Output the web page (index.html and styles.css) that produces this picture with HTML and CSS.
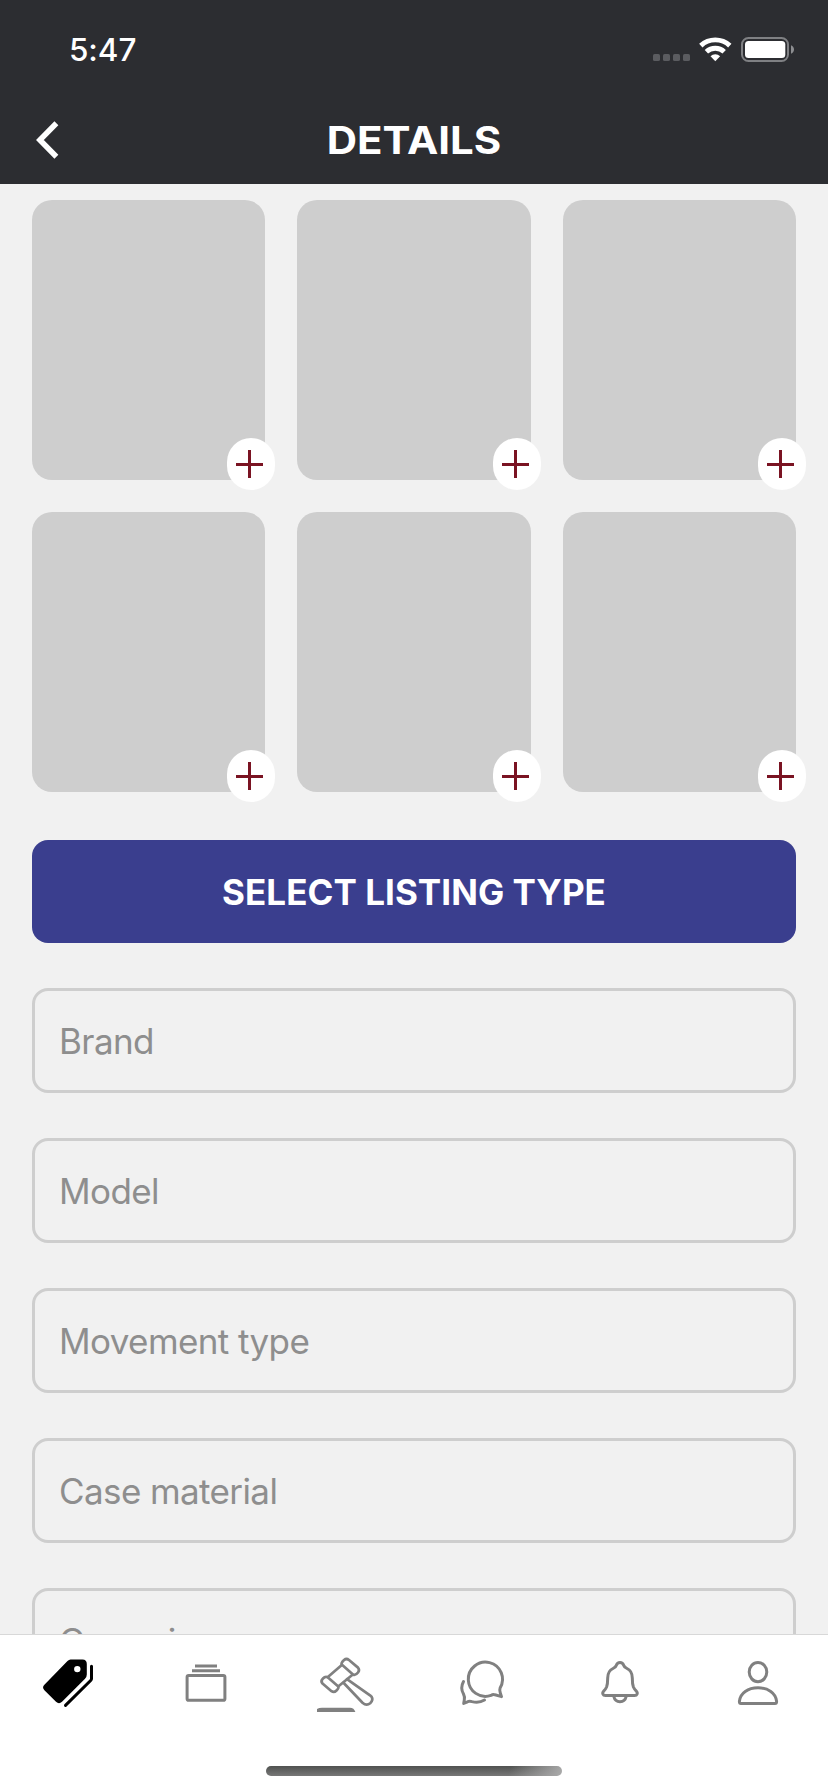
FILE: index.html
```html
<!DOCTYPE html>
<html lang="en">
<head>
<meta charset="utf-8">
<title>Details</title>
<link rel="stylesheet" href="styles.css">
</head>
<body>
<div class="app">
  <header class="header">
    <div class="status">
      <span class="time">5:47</span>
      <svg class="status-icons" viewBox="0 0 142 26" width="142" height="26">
        <g fill="#5b5c60"><rect x="0" y="17" width="7" height="7" rx="1.6"/><rect x="10" y="17" width="7" height="7" rx="1.6"/><rect x="20" y="17" width="7" height="7" rx="1.6"/><rect x="30" y="17" width="7" height="7" rx="1.6"/></g>
        <g fill="none" stroke="#fff" stroke-width="4.9">
          <path d="M47.8 8.6A21.3 21.3 0 0 1 76.8 8.6"/>
          <path d="M53.4 14.8A13 13 0 0 1 71.2 14.8"/>
        </g>
        <path d="M62.3 24.3L57.5 19.2A7 7 0 0 1 67.1 19.2Z" fill="#fff"/>
        <rect x="89" y="1" width="46" height="23" rx="6.5" fill="none" stroke="#7f8083" stroke-width="2"/>
        <rect x="92" y="4" width="40.3" height="17" rx="3.5" fill="#fff"/>
        <path d="M138 8.3C142 10 142 15 138 16.8Z" fill="#8d8e91"/>
      </svg>
    </div>
    <div class="title-bar">
      <svg class="back" viewBox="0 0 32 44" width="32" height="44"><path d="M24.4 5.3L7.9 22L24.4 38.7" fill="none" stroke="#fff" stroke-width="5.5"/></svg>
      <h1 class="title">DETAILS</h1>
    </div>
  </header>

  <main class="content">
    <div class="photos">
      <div class="photo"><span class="add"></span></div>
      <div class="photo"><span class="add"></span></div>
      <div class="photo"><span class="add"></span></div>
      <div class="photo"><span class="add"></span></div>
      <div class="photo"><span class="add"></span></div>
      <div class="photo"><span class="add"></span></div>
    </div>
    <div class="listing-button"><span>SELECT LISTING TYPE</span></div>
    <div class="fields">
      <div class="field">Brand</div>
      <div class="field">Model</div>
      <div class="field">Movement type</div>
      <div class="field">Case material</div>
      <div class="field">Case size</div>
    </div>
  </main>

  <footer class="footer">
    <nav class="tabs">
      <svg class="tab tab-active" viewBox="0 0 64 64">
        <path fill="#000" fill-rule="evenodd" d="M33.5 8.5H45.5Q49.8 8.5 49.8 13V23.5Q49.8 26 48 27.8L25 50.8Q22 53.6 19 50.8L7.4 39.3Q4.7 36.5 7.4 33.8L30.5 10Q32 8.5 33.5 8.5ZM40.3 14.9A3.2 3.2 0 1 0 40.3 21.3A3.2 3.2 0 1 0 40.3 14.9Z"/>
        <path fill="none" stroke="#000" d="M54.5 15.2V27.8Q54.5 28.6 53.9 29.2L28.5 54.4"/>
      </svg>
      <svg class="tab" viewBox="0 0 64 64">
        <rect x="12.1" y="24.5" width="37.8" height="24.8" rx="1.6"/>
        <path class="flat" d="M17 19.7H45M20 15H42"/>
      </svg>
      <svg class="tab tab-thin" viewBox="0 0 64 64">
        <path d="M28.7 13.6Q27.8 12 31 9Q33.5 7 36 9L45 16.6Q47 19 45 21.5Q42.5 24.8 40 23.5Z"/>
        <path d="M14.7 26.2Q12.2 25 10 27.5Q7.3 30 9.5 32.5L18.5 40.2Q21 42 23.5 39.5Q26.5 36.5 25 35.2Z"/>
        <path d="M28.2 14.5L14.9 26M39.2 24L25.5 35.3"/>
        <path d="M30.5 31.7L49.5 51.8Q53.5 55.3 57.2 52.3Q60.6 49 58.6 45.8L57 44.3L34 28.2"/>
        <path class="base" d="M4 61V58Q6 56.7 9 56.7H37Q41 56.7 42.4 61Z"/>
      </svg>
      <svg class="tab" viewBox="0 0 64 64">
        <path d="M49.1 37A17.1 17.1 0 1 0 40 44.4Q42 43 44 43.8L50.5 45.6L49.3 42Q48.3 39 49.1 37Z"/>
        <path d="M12.5 30.5Q9 37 12.5 43Q14 46 13.3 49L12.7 52.4L16.5 50.8Q18.3 49.7 21 50.6Q28 52.4 33.5 49"/>
      </svg>
      <svg class="tab" viewBox="0 0 64 64">
        <path d="M31 11.5Q28.3 11.5 27.2 14.5Q26.7 16.3 24 17.5Q18.7 20 18.7 27Q18.7 33 17.6 36Q16.8 37.8 14.8 40Q13.2 41.8 14 43.2Q14.5 44.6 16.5 44.6H45.5Q47.5 44.6 48 43.2Q48.8 41.8 47.2 40Q45.2 37.8 44.4 36Q43.3 33 43.3 27Q43.3 20 38 17.5Q35.3 16.3 34.8 14.5Q33.7 11.5 31 11.5Z"/>
        <path d="M24.8 45.5A6.4 6.9 0 0 0 37.2 45.5"/>
      </svg>
      <svg class="tab" viewBox="0 0 64 64">
        <ellipse cx="31" cy="21.1" rx="8.8" ry="9.6"/>
        <path d="M12.4 50.4C13.2 42 21 36.8 31 36.8S48.8 42 49.6 50.4Q49.6 52.4 48 52.4H14Q12.4 52.4 12.4 50.4Z"/>
      </svg>
    </nav>
    <div class="home-indicator"></div>
  </footer>
</div>
</body>
</html>
```
FILE: styles.css
```css
* { box-sizing: border-box; }
body { margin: 0; font-family: Inter, "Liberation Sans", sans-serif; }
.app {
  width: 828px;
  height: 1792px;
  display: flex;
  flex-direction: column;
  overflow: hidden;
  background: #f1f1f1;
}
.header { flex: none; height: 184px; background: #2c2d31; color: #fff; }
.status {
  height: 98px;
  padding: 0 33px 0 69px;
  display: flex;
  align-items: center;
  justify-content: space-between;
}
.time { font-size: 31.5px; font-weight: 550; line-height: 40px; letter-spacing: -0.1px; padding-top: 2px; }
.status-icons { display: block; margin-top: 2px; }
.title-bar {
  height: 84px;
  padding: 0 32px;
  display: grid;
  grid-template-columns: 32px 1fr 32px;
  align-items: center;
}
.title {
  margin: 0;
  font-size: 38.5px;
  line-height: 48px;
  font-weight: 700;
  text-align: center;
  transform: scaleX(1.09);
}
.content { flex: 1; min-height: 0; overflow: hidden; padding: 16px 32px 0; }
.photos { display: grid; grid-template-columns: repeat(3, 1fr); gap: 32px; }
.photo { position: relative; height: 280px; border-radius: 20px; background: #cecece; }
.add {
  position: absolute;
  right: -10px;
  bottom: -10px;
  width: 48px;
  height: 52px;
  border-radius: 24px;
  background:
    linear-gradient(#7a1322, #7a1322) 9px 24.5px / 27px 3px no-repeat,
    linear-gradient(#7a1322, #7a1322) 21px 12px / 3px 28px no-repeat,
    #fff;
}
.listing-button {
  margin-top: 48px;
  height: 103px;
  border-radius: 16px;
  background: #3a3e8e;
  color: #fff;
  font-size: 35px;
  font-weight: 700;
  letter-spacing: 0.05px;
  display: flex;
  align-items: center;
  justify-content: center;
}
.fields { margin-top: 45px; display: flex; flex-direction: column; gap: 45px; }
.field {
  flex: none;
  height: 105px;
  border: 3px solid #cecece;
  border-radius: 16px;
  padding: 0 24px;
  display: flex;
  align-items: center;
  color: #8e8e8e;
  font-size: 35px;
  letter-spacing: -0.6px;
}
.footer {
  flex: none;
  height: 158px;
  border-top: 1px solid #d8d8d8;
  background: #fff;
  display: flex;
  flex-direction: column;
  align-items: center;
  justify-content: space-between;
  padding: 16px 0;
}
.tabs { width: 828px; display: grid; grid-template-columns: repeat(6, 1fr); justify-items: center; }
.tab { width: 64px; height: 64px; fill: none; stroke: #808080; stroke-width: 3; stroke-linejoin: round; stroke-linecap: round; }
.tab-active { stroke: none; }
.tab-thin { stroke-width: 2.7; }
.flat { stroke-linecap: butt; }
.base { fill: #808080; stroke: none; }
.home-indicator {
  width: 296px;
  height: 10px;
  border-radius: 5px;
  background:
    linear-gradient(105deg, transparent 82%, #aaa 100%),
    linear-gradient(#505250, #777);
}
```
